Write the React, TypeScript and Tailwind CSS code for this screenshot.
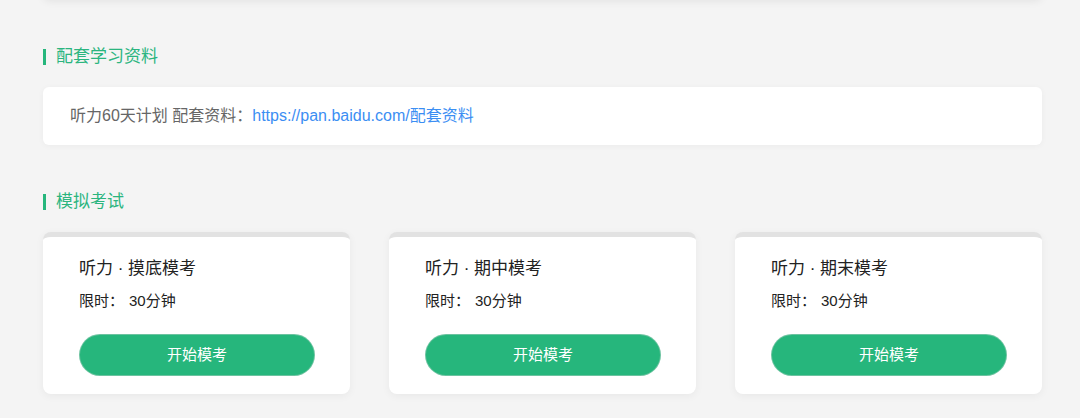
import React from "react";

const font = { fontFamily: '"Liberation Sans", "Noto Sans CJK SC", sans-serif' };

const exams = ["听力 · 摸底模考", "听力 · 期中模考", "听力 · 期末模考"];

function SectionTitle({ text }: { text: string }) {
  return (
    <div className="flex items-center h-[24px]">
      <span className="w-[3px] h-[16px] bg-[#26b67c]" />
      <span className="ml-[10px] text-[17px] text-[#2bb57f] leading-[24px]">{text}</span>
    </div>
  );
}

function ExamCard({ title }: { title: string }) {
  return (
    <div className="bg-white rounded-[8px] border-t-[5px] border-[#e2e2e2] shadow-[0_2px_8px_rgba(0,0,0,0.05)] px-[36px] pt-[20px] pb-[18px]">
      <div className="text-[17px] leading-[24px] text-[#222]">{title}</div>
      <div className="mt-[9px] text-[15px] leading-[22px] text-[#222]">
        限时：<span className="ml-[5px]">30分钟</span>
      </div>
      <button className="mt-[22px] w-[236px] h-[42px] rounded-full bg-[#26b67c] text-white text-[15px] border border-[#d8d8d8]/40">
        开始模考
      </button>
    </div>
  );
}

export default function App() {
  return (
    <div style={font} className="w-[1080px] h-[418px] bg-[#f4f4f4] overflow-hidden">
      <div className="ml-[43px] w-[999px]">
        <div className="-mt-[12px] h-[11px] bg-white rounded-b-[6px] shadow-[0_2px_8px_rgba(0,0,0,0.08)]" />
        <div className="mt-[46px]">
          <SectionTitle text="配套学习资料" />
        </div>
        <div className="mt-[18px] h-[58px] bg-white rounded-[6px] shadow-[0_1px_6px_rgba(0,0,0,0.04)] flex items-center px-[27px] text-[16px] text-[#666]">
          听力60天计划 配套资料：
          <a className="text-[#3b8ef3]">https://pan.baidu.com/配套资料</a>
        </div>
        <div className="mt-[45px]">
          <SectionTitle text="模拟考试" />
        </div>
        <div className="mt-[18px] grid grid-cols-3 gap-[39px]">
          {exams.map((t) => (
            <ExamCard key={t} title={t} />
          ))}
        </div>
      </div>
    </div>
  );
}
